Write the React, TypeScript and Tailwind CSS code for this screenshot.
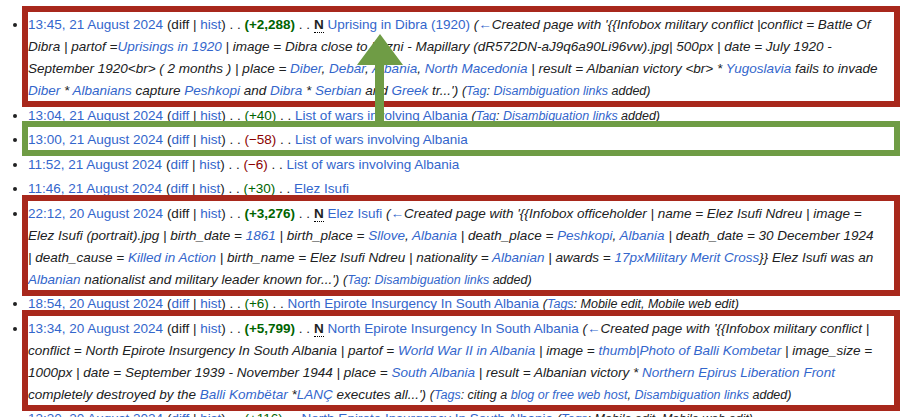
import React from "react";

const A = ({ children }: { children: React.ReactNode }) => <a className="text-[#3366cc]">{children}</a>;
const Sep = () => <span> . . </span>;
const DH = ({ plain }: { plain?: boolean }) =>
  plain ? (
    <span> (diff | <A>hist</A>)</span>
  ) : (
    <span> (<A>diff</A> | <A>hist</A>)</span>
  );
const N = () => <b className="border-b border-dotted border-black">N</b>;
const Tag = ({ children }: { children: React.ReactNode }) => <span className="italic text-[12.5px]">{children}</span>;

function Item({ box, children }: { box?: "red" | "green"; children: React.ReactNode }) {
  return (
    <li className="relative mb-[2.5px]">
      {box && (
        <div
          className={`pointer-events-none absolute -left-[6px] right-[-22px] -top-[8px] -bottom-[5px] border-[6px] ${
            box === "red" ? "border-[#a8281c]" : "border-[#6f9c45]"
          }`}
        />
      )}
      {children}
    </li>
  );
}

export default function App() {
  return (
    <div className="relative w-[919px] h-[417px] overflow-hidden bg-white text-[#202122] text-[13.5px] leading-[22px]" style={{ fontFamily: "'Liberation Sans', Arial, sans-serif" }}>
      <ul className="list-disc pl-[28px] pt-[14px] w-[878px]">
        <Item box="red">
          <A>13:45, 21 August 2024</A>
          <DH plain />
          <Sep />
          <b className="text-[#006400]">(+2,288)</b>
          <Sep />
          <N /> <A>Uprising in Dibra (1920)</A>{" "}
          <span className="italic">
            (<A>←</A>Created page with '{"{{"}Infobox military conflict |conflict = Battle Of Dibra | partof =<A>Uprisings in 1920</A> | image = Dibra close to Luzni - Mapillary (dR572DN-aJ9q6a90Li96vw).jpg| 500px | date = July 1920 - September 1920&lt;br&gt; ( 2 months ) | place = <A>Diber</A>, <A>Debar</A>, <A>Albania</A>, <A>North Macedonia</A> | result = Albanian victory &lt;br&gt; * <A>Yugoslavia</A> fails to invade <A>Diber</A> * <A>Albanians</A> capture <A>Peshkopi</A> and <A>Dibra</A> * <A>Serbian</A> and <A>Greek</A> tr...')
          </span>{" "}
          <Tag>(<A>Tag</A>: <A>Disambiguation links</A> added)</Tag>
        </Item>
        <Item>
          <A>13:04, 21 August 2024</A>
          <DH />
          <Sep />
          <span className="text-[#006400]">(+40)</span>
          <Sep />
          <A>List of wars involving Albania</A> <Tag>(<A>Tag</A>: <A>Disambiguation links</A> added)</Tag>
        </Item>
        <Item box="green">
          <A>13:00, 21 August 2024</A>
          <DH />
          <Sep />
          <span className="text-[#8b0000]">(−58)</span>
          <Sep />
          <A>List of wars involving Albania</A>
        </Item>
        <Item>
          <A>11:52, 21 August 2024</A>
          <DH />
          <Sep />
          <span className="text-[#8b0000]">(−6)</span>
          <Sep />
          <A>List of wars involving Albania</A>
        </Item>
        <Item>
          <A>11:46, 21 August 2024</A>
          <DH />
          <Sep />
          <span className="text-[#006400]">(+30)</span>
          <Sep />
          <A>Elez Isufi</A>
        </Item>
        <Item box="red">
          <A>22:12, 20 August 2024</A>
          <DH plain />
          <Sep />
          <b className="text-[#006400]">(+3,276)</b>
          <Sep />
          <N /> <A>Elez Isufi</A>{" "}
          <span className="italic">
            (<A>←</A>Created page with '{"{{"}Infobox officeholder | name = Elez Isufi Ndreu | image = Elez Isufi (portrait).jpg | birth_date = <A>1861</A> | birth_place = <A>Sllove</A>, <A>Albania</A> | death_place = <A>Peshkopi</A>, <A>Albania</A> | death_date = 30 December 1924 | death_cause = <A>Killed in Action</A> | birth_name = Elez Isufi Ndreu | nationality = <A>Albanian</A> | awards = <A>17pxMilitary Merit Cross</A>{"}}"} Elez Isufi was an <A>Albanian</A> nationalist and military leader known for...')
          </span>{" "}
          <Tag>(<A>Tag</A>: <A>Disambiguation links</A> added)</Tag>
        </Item>
        <Item>
          <A>18:54, 20 August 2024</A>
          <DH />
          <Sep />
          <span className="text-[#006400]">(+6)</span>
          <Sep />
          <A>North Epirote Insurgency In South Albania</A> <Tag>(<A>Tags</A>: Mobile edit, Mobile web edit)</Tag>
        </Item>
        <Item box="red">
          <A>13:34, 20 August 2024</A>
          <DH plain />
          <Sep />
          <b className="text-[#006400]">(+5,799)</b>
          <Sep />
          <N /> <A>North Epirote Insurgency In South Albania</A>{" "}
          <span className="italic">
            (<A>←</A>Created page with '{"{{"}Infobox military conflict | conflict = North Epirote Insurgency In South Albania | partof = <A>World War II in Albania</A> | image = <A>thumb|Photo of Balli Kombetar</A> | image_size = 1000px | date = September 1939 - November 1944 | place = <A>South Albania</A> | result = Albanian victory * <A>Northern Epirus Liberation Front</A> completely destroyed by the <A>Balli Kombëtar</A> *<A>LANÇ</A> executes all...')
          </span>{" "}
          <Tag>(<A>Tags</A>: citing a <A>blog or free web host</A>, <A>Disambiguation links</A> added)</Tag>
        </Item>
        <Item>
          <A>13:30, 20 August 2024</A>
          <DH />
          <Sep />
          <span className="text-[#006400]">(+116)</span>
          <Sep />
          <A>North Epirote Insurgency In South Albania</A> <Tag>(<A>Tags</A>: Mobile edit, Mobile web edit)</Tag>
        </Item>
      </ul>
      <svg className="absolute left-[355px] top-[34px]" width="50" height="90" viewBox="0 0 50 90">
        <polygon points="25,0 48,31 29,31 29,90 20,90 20,31 2,31" fill="#6f9c45" />
      </svg>
    </div>
  );
}
